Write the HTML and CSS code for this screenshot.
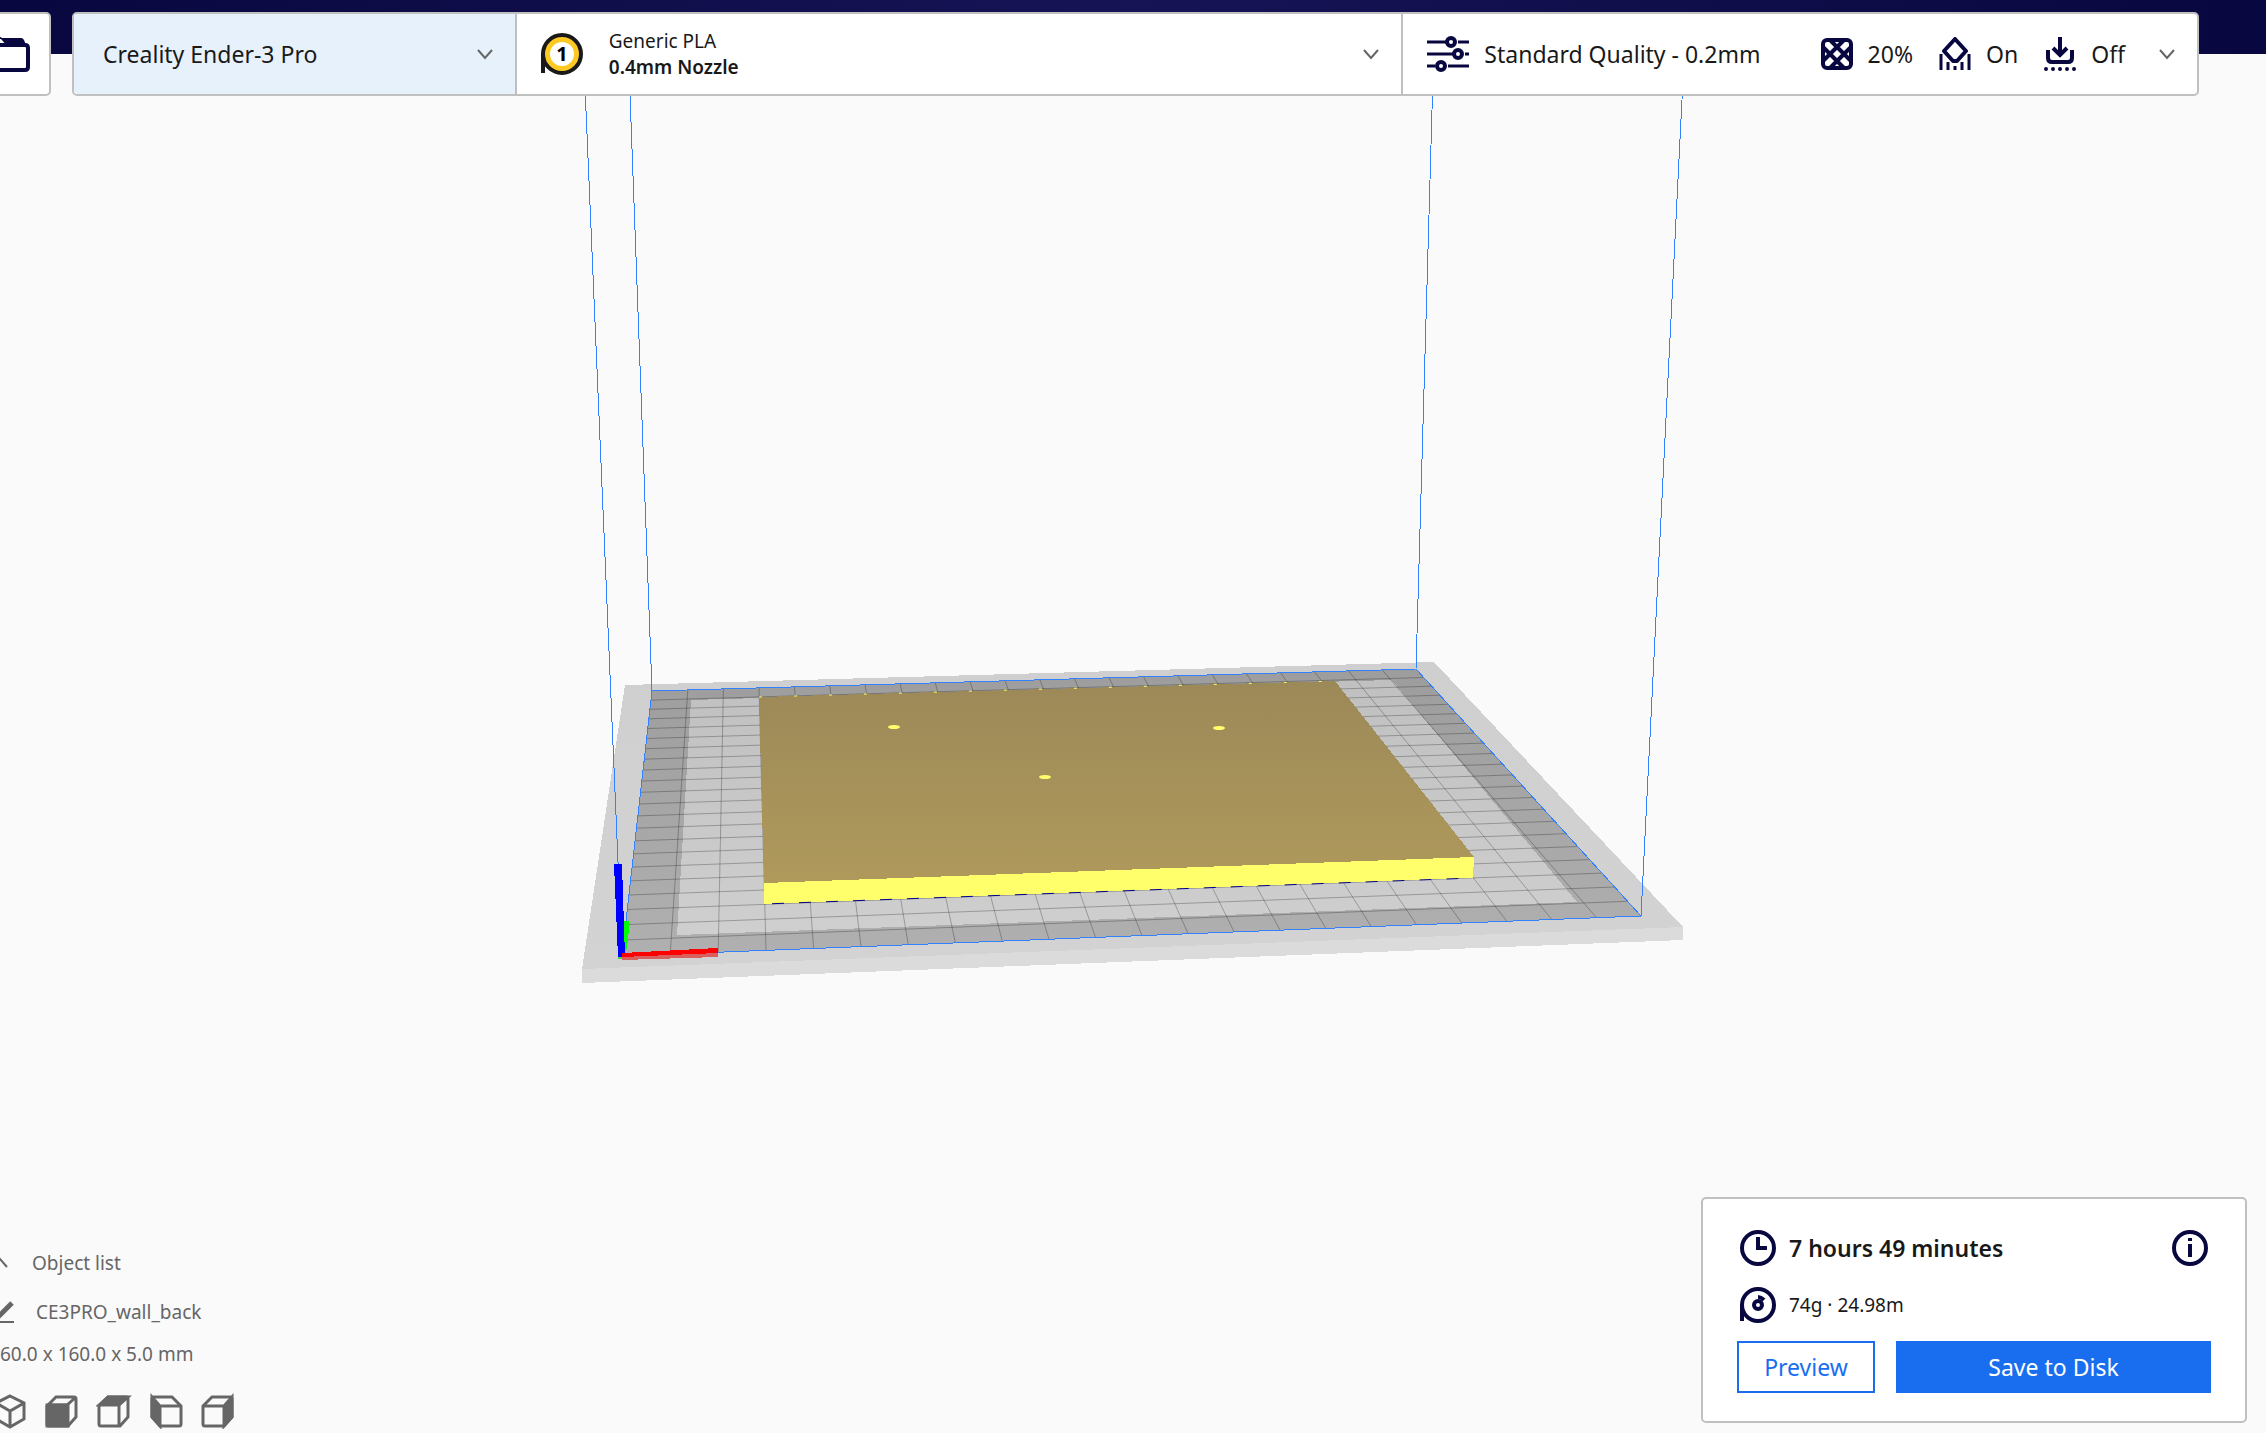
FILE: index.html
```html
<!DOCTYPE html>
<html lang="en">
<head>
<meta charset="utf-8">
<title>Print preparation</title>
<link rel="stylesheet" href="styles.css">
</head>
<body>
<header class="titlebar"></header>

<svg class="viewport" viewBox="0 0 2266 1433" preserveAspectRatio="xMidYMin slice" aria-label="Build plate">
  <defs>
    <linearGradient id="gPlate" x1="0" y1="0" x2="0" y2="1"><stop offset="0" stop-color="#cfcfcf"/><stop offset="1" stop-color="#d3d3d3"/></linearGradient>
    <linearGradient id="gEdge" x1="0" y1="0" x2="0" y2="1"><stop offset="0" stop-color="#9d9d9d"/><stop offset="1" stop-color="#b0b0b0"/></linearGradient>
    <linearGradient id="gArea" x1="0" y1="0" x2="0" y2="1"><stop offset="0" stop-color="#c0c0c0"/><stop offset="1" stop-color="#cfcfcf"/></linearGradient>
    <linearGradient id="gModel" x1="0" y1="0" x2="0" y2="1"><stop offset="0" stop-color="#9c8958"/><stop offset="1" stop-color="#af995b"/></linearGradient>
  </defs>
  <polygon fill="url(#gPlate)" points="625,685 1434,662 1683,927 582,969"/>
  <polygon fill="#dbdbdb" points="582,969 1683,927 1683,940 582,983"/>
  <polygon fill="url(#gEdge)" points="652,691 1416,669 1641,916 622,956"/>
  <polygon fill="url(#gArea)" points="691,700 1392,680 1577,902 677,935"/>
  <path id="grid" class="grid-lines"/>
  <polygon class="volume" points="652,691 1416,669 1641,916 622,956"/>
  <path class="volume" d="M583 40L622 956M628 40L652 691M1434 40L1416 669M1685 40L1641 916"/>
  <polygon fill="url(#gModel)" points="759,697 1335,681 1474,857 764,883"/>
  <polygon fill="#ffff6c" points="764,883 1474,857 1473,878 764,904"/>
  <path d="M764 904L1473 878" stroke="#00008c" stroke-dasharray="12 15" stroke-dashoffset="-8"/>
  <path d="M759 697L1335 681" stroke="#ffff6c" stroke-dasharray="3 32"/>
  <g fill="#ffff6c"><ellipse cx="894" cy="727" rx="6" ry="2"/><ellipse cx="1219" cy="728" rx="6" ry="2"/><ellipse cx="1045" cy="777" rx="6" ry="2"/></g>
  <polygon fill="#4ccf4c" points="618,957 626,957 626,959 618,959"/>
  <polygon fill="#00ff00" points="624,921 629,921 629,929 627,948 624,952"/>
  <polygon fill="#d95f5f" points="622,956 718,952 718,957 622,960"/>
  <polygon fill="#0000ff" points="614,864 622,864 625,957 618,957"/>
  <polygon fill="#ff0000" points="622,953 718,948 718,953 622,957"/>
</svg>

<nav class="toolbar">
  <button class="open-file" type="button" aria-label="Open file">
    <svg viewBox="0 0 44 44"><path d="M4 13h34q3 0 3 3v19q0 3-3 3H4" fill="none" stroke="#08073f" stroke-width="4"/><path d="M0 4h12l3 2h19q2 0 3 2l2 5-2 2H21l-7-8H0z" fill="#08073f"/></svg>
  </button>
  <div class="stage">
    <button class="machine" type="button"><span>Creality Ender-3 Pro</span><svg class="chevron" viewBox="0 0 16 16"><path d="M1 4l7 8 7-8"/></svg></button>
    <button class="material" type="button">
      <svg class="spool" viewBox="0 0 42 42"><path d="M0 40V21h4v19z" fill="#191919"/><circle cx="21" cy="21" r="19" fill="#ffc924" stroke="#191919" stroke-width="4"/><circle cx="21" cy="21" r="12" fill="#fff"/><text x="21" y="28" text-anchor="middle">1</text></svg>
      <span class="material-text"><span>Generic PLA</span><b>0.4mm Nozzle</b></span>
      <svg class="chevron" viewBox="0 0 16 16"><path d="M1 4l7 8 7-8"/></svg>
    </button>
    <button class="settings" type="button">
      <svg class="sliders" viewBox="0 0 42 36"><path d="M0 6h19M31 6h11M0 18h26M38 18h4M0 30h8M21 30h21"/><g stroke-width="4"><circle cx="24" cy="6" r="4"/><circle cx="31" cy="18" r="4"/><circle cx="14" cy="30" r="4"/></g></svg>
      <span class="profile">Standard Quality - 0.2mm</span>
      <svg class="param" viewBox="0 0 32 34"><rect x="2" y="3" width="28" height="28" rx="4" stroke-width="4"/><path d="M2 10L23 31M9 3l21 21M30 10L9 31M23 3L2 24" stroke-width="4"/></svg><span class="value">20%</span>
      <svg class="param" viewBox="0 0 32 34"><path d="M16 2l11 12-9 10h-4L5 14z" stroke-width="4" stroke-linejoin="round"/><path d="M2 33V17M9 33v-8M16 33v-4M23 33v-8M30 33V17"/></svg><span class="value">On</span>
      <svg class="param" viewBox="0 0 32 34"><path d="M16 0v18M9 11l7 7 7-7M4 13v8q0 4 4 4h16q4 0 4-4v-8" stroke-width="4"/><path d="M2 32h29" stroke-width="4" stroke-linecap="round" stroke-dasharray="0 7"/></svg><span class="value">Off</span>
      <svg class="chevron" viewBox="0 0 16 16"><path d="M1 4l7 8 7-8"/></svg>
    </button>
  </div>
</nav>

<main class="bottom">
  <section class="objects">
    <button class="list-toggle" type="button"><svg viewBox="0 0 16 16"><path d="M1 12l7-8 7 8" fill="none" stroke="#666" stroke-width="2"/></svg>Object list</button>
    <div class="object-name"><svg viewBox="0 0 24 24"><path d="M0 22h22" stroke="#666" stroke-width="2"/><path d="M5 18L20 3" stroke="#666" stroke-width="5"/></svg>CE3PRO_wall_back</div>
    <div class="dimensions">60.0 x 160.0 x 5.0 mm</div>
    <div class="views">
      <button type="button" aria-label="3D view"><svg viewBox="0 0 36 36"><path d="M18 3l14 7v16l-14 8-14-8V10zM4 10l14 8 14-8M18 18v16"/></svg></button>
      <button type="button" aria-label="Front view"><svg viewBox="0 0 36 36"><path d="M3 13l9-9h18q2 0 2 2v18l-8 9H5q-2 0-2-2zM3 12h20l9-8"/><path class="face" d="M3 12h21v21H3z"/></svg></button>
      <button type="button" aria-label="Top view"><svg viewBox="0 0 36 36"><path d="M3 13l9-9h18q2 0 2 2v18l-8 9H5q-2 0-2-2zM23 12v21"/><path class="face" d="M3 12l9-8h20l-9 8z"/></svg></button>
      <button type="button" aria-label="Left view"><svg viewBox="0 0 36 36"><path d="M33 13l-9-9H6q-2 0-2 2v18l8 9h19q2 0 2-2zM33 13H13"/><path class="face" d="M4 4l8 9v20l-8-9z"/></svg></button>
      <button type="button" aria-label="Right view"><svg viewBox="0 0 36 36"><path d="M3 13l9-9h18q2 0 2 2v18l-8 9H5q-2 0-2-2zM3 13h20"/><path class="face" d="M24 13l8-9v20l-8 9z"/></svg></button>
    </div>
  </section>

  <section class="job">
    <div class="job-row">
      <svg viewBox="0 0 36 36"><circle cx="18" cy="18" r="16"/><path d="M18 7v11h9"/></svg><b>7 hours 49 minutes</b>
      <button class="info" type="button" aria-label="Print details"><svg viewBox="0 0 36 36"><circle cx="18" cy="18" r="16"/><path d="M18 14v13M18 8v3"/></svg></button>
    </div>
    <div class="job-row job-usage">
      <svg viewBox="0 0 36 36"><circle cx="18" cy="18" r="16"/><circle cx="18" cy="18" r="4"/><path d="M2 18v16M18 10q3 0 6 3"/></svg><span>74g · 24.98m</span>
    </div>
    <div class="actions"><button class="preview" type="button">Preview</button><button class="save" type="button">Save to Disk</button></div>
  </section>
</main>
<script src="scene.js"></script>
</body>
</html>
```
FILE: styles.css
```css
* { box-sizing: border-box; }
body { margin: 0; min-height: 100vh; display: flex; flex-direction: column; position: relative; overflow: hidden; background: #fafafa; color: #191919; font: 23px/28px "Noto Sans", sans-serif; }
button { font: inherit; color: inherit; background: none; border: 0; padding: 0; }
svg { display: block; flex: none; }
b { font-weight: 600; }
.titlebar { position: absolute; inset: 0 0 auto; height: 54px; background: linear-gradient(90deg, #08073f, #161455 50%, #08073f); }
.viewport { position: absolute; inset: 0; width: 100%; height: 100%; }
.viewport polygon { shape-rendering: crispEdges; }
.volume { fill: none; stroke: #3282ff; stroke-width: 1; shape-rendering: crispEdges; }
.grid-lines { fill: none; stroke: #000; stroke-opacity: 0.26; stroke-width: 1; }

.toolbar { position: relative; display: flex; gap: 21px; height: 84px; margin: 12px 67px 0 -33px; }
.open-file { width: 84px; border: 2px solid #c0c0c0; border-radius: 5px; background: #fff; display: flex; align-items: center; justify-content: center; }
.open-file svg { width: 44px; height: 44px; }
.stage { flex: 1; display: grid; grid-template-columns: 441fr 887fr 796fr; border: 2px solid #c0c0c0; border-radius: 5px; background: #fff; overflow: hidden; }
.stage button { display: flex; align-items: center; text-align: left; white-space: nowrap; }
.stage button + button { border-left: 2px solid #c0c0c0; }
.stage .chevron { width: 16px; height: 16px; margin-left: auto; fill: none; stroke: #666; stroke-width: 2; }
.stage .machine { background: #e7f1fc; padding: 0 22px 0 29px; }
.stage .material { padding: 0 22px 0 24px; gap: 26px; }
.spool { width: 42px; height: 42px; }
.spool text { font: 700 20px "Noto Sans", sans-serif; }
.material-text { display: grid; font-size: 19px; line-height: 26px; }
.stage .settings { padding: 0 22px 0 24px; }
.settings svg { fill: none; stroke: #08073f; stroke-width: 3; }
.sliders { width: 42px; height: 36px; }
.profile { margin: 0 auto 0 15px; }
.param { width: 32px; height: 34px; }
.value { margin: 0 26px 0 15px; }
.settings .chevron { margin-left: 8px; }

.bottom { position: relative; margin-top: auto; display: flex; justify-content: space-between; align-items: flex-end; }
.objects { color: #666; font-size: 19px; }
.list-toggle, .object-name { display: flex; align-items: center; gap: 24px; margin-left: -8px; }
.list-toggle svg { width: 16px; height: 16px; }
.object-name { gap: 20px; margin-top: 21px; }
.object-name svg { width: 24px; height: 24px; }
.dimensions { margin-top: 14px; }
.views { display: flex; gap: 16px; margin: 25px 0 4px -8px; }
.views svg { width: 36px; height: 36px; fill: none; stroke: #666; stroke-width: 3; }
.views .face { fill: #666; }

.job { width: 546px; margin: 0 19px 10px 0; padding: 31px 34px 28px; border: 2px solid #c0c0c0; border-radius: 5px; background: #fff; }
.job svg { width: 36px; height: 36px; fill: none; stroke: #08073f; stroke-width: 4; }
.job-row { display: flex; align-items: center; gap: 13px; padding: 0 3px; }
.info { margin-left: auto; }
.job-usage { margin-top: 21px; font-size: 19px; }
.actions { display: grid; grid-template-columns: 138px 1fr; gap: 21px; margin-top: 18px; }
.actions button { height: 52px; border: 2px solid #196ef0; color: #196ef0; }
.actions .save { background: #196ef0; color: #fff; }
```
FILE: scene.js
```js
// Projects the 22 x 22 bed grid onto the corners of the build plate.
const corners = [[652, 691], [1416, 669], [1641, 916], [622, 956]];
const cells = 22;

function projector([[x0, y0], [x1, y1], [x2, y2], [x3, y3]]) {
  const dx1 = x1 - x2, dx2 = x3 - x2, sx = x0 - x1 + x2 - x3;
  const dy1 = y1 - y2, dy2 = y3 - y2, sy = y0 - y1 + y2 - y3;
  const det = dx1 * dy2 - dx2 * dy1;
  const g = (sx * dy2 - dx2 * sy) / det;
  const h = (dx1 * sy - sx * dy1) / det;
  return (u, v) => {
    const w = g * u + h * v + 1;
    const x = ((x1 - x0 + g * x1) * u + (x3 - x0 + h * x3) * v + x0) / w;
    const y = ((y1 - y0 + g * y1) * u + (y3 - y0 + h * y3) * v + y0) / w;
    return x.toFixed(1) + " " + y.toFixed(1);
  };
}

const at = projector(corners);
let path = "";
for (let i = 1; i < cells; i++) {
  const t = i / cells;
  path += `M${at(t, 0)}L${at(t, 1)}M${at(0, t)}L${at(1, t)}`;
}
document.getElementById("grid").setAttribute("d", path);
```
